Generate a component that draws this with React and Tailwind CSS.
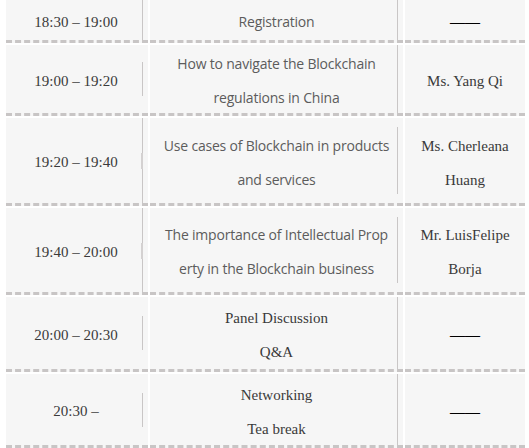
import React from 'react';

const rows = [
  {
    h: 'h-[43px]',
    time: '18:30 – 19:00',
    topic: ['Registration'],
    topicSerif: false,
    speaker: ['——'],
    line1: 'h-full',
    line2: 'h-full',
  },
  {
    h: 'h-[71px]',
    time: '19:00 – 19:20',
    topic: ['How to navigate the Blockchain', 'regulations in China'],
    topicSerif: false,
    speaker: ['Ms. Yang Qi'],
    line1: 'h-[34px]',
    line2: 'h-full',
  },
  {
    h: 'h-[88px]',
    time: '19:20 – 19:40',
    topic: ['Use cases of Blockchain in products', 'and services'],
    topicSerif: false,
    speaker: ['Ms. Cherleana', 'Huang'],
    line1: 'h-full',
    line2: 'h-[67px]',
    thick: true,
  },
  {
    h: 'h-[87px]',
    time: '19:40 – 20:00',
    topic: ['The importance of Intellectual Prop', 'erty in the Blockchain business'],
    topicSerif: false,
    speaker: ['Mr. LuisFelipe', 'Borja'],
    line1: 'h-full',
    line2: 'h-[66px]',
    thick: true,
  },
  {
    h: 'h-[75px]',
    time: '20:00 – 20:30',
    topic: ['Panel Discussion', 'Q&A'],
    topicSerif: true,
    speaker: ['——'],
    line1: 'h-[34px]',
    line2: 'h-full',
  },
  {
    h: 'h-[74px]',
    time: '20:30 –',
    topic: ['Networking', 'Tea break'],
    topicSerif: true,
    speaker: ['——'],
    line1: 'h-[34px]',
    line2: 'h-full',
  },
];

const serif = "font-['Liberation_Serif','Times_New_Roman',serif] text-[15px] text-[#3a3a3a]";
const sans = "font-['Open_Sans','Noto_Sans',sans-serif] font-normal text-[14px] tracking-[-0.2px] text-[#5c5c5c]";

const Divider = ({ h, thick }) => (
  <div className={`relative w-px ${h === 'h-full' ? 'self-stretch' : h} bg-[#c9c6c6] mr-[5px] shrink-0`}>
    {thick && <div className="absolute left-[-1px] top-[35px] w-[2px] h-[16px] bg-[#d4d1d1]" />}
  </div>
);

const App = () => {
  return (
    <div className="w-[529px] h-[448px] bg-white overflow-hidden pl-[6px]">
      <div className="grid grid-cols-[142px_253px_120px] gap-x-[2px] gap-y-[2px]">
        {rows.map((r, i) => (
          <React.Fragment key={i}>
            {/* Time */}
            <div className={`${r.h} flex items-center bg-[#f6f6f6] border-b-[3px] border-dashed border-[#c8c5c5]`}>
              <div className={`flex-1 text-center pl-[4px] pt-[4px] ${serif}`}>{r.time}</div>
              <Divider h={r.line1} thick={r.thick} />
            </div>

            {/* Topic */}
            <div className={`${r.h} flex items-center bg-[#f6f6f6] border-b-[3px] border-dashed border-[#c8c5c5]`}>
              <div className={`flex-1 text-center pl-[6px] pt-[4px] leading-[34px] ${r.topicSerif ? serif : sans}`}>
                {r.topic.map((t, j) => (
                  <div key={j} className="whitespace-nowrap">{t}</div>
                ))}
              </div>
              <Divider h={r.line2} />
            </div>

            {/* Speaker */}
            <div className={`${r.h} flex items-center justify-center bg-[#f6f6f6] border-b-[3px] border-dashed border-[#c8c5c5]`}>
              <div className={`text-center pt-[4px] leading-[34px] ${serif}`}>
                {r.speaker.map((t, j) => (
                  <div key={j} className={`whitespace-nowrap ${t === '——' ? 'text-black font-bold' : ''}`}>{t}</div>
                ))}
              </div>
            </div>
          </React.Fragment>
        ))}
      </div>
    </div>
  );
};

export default App;
